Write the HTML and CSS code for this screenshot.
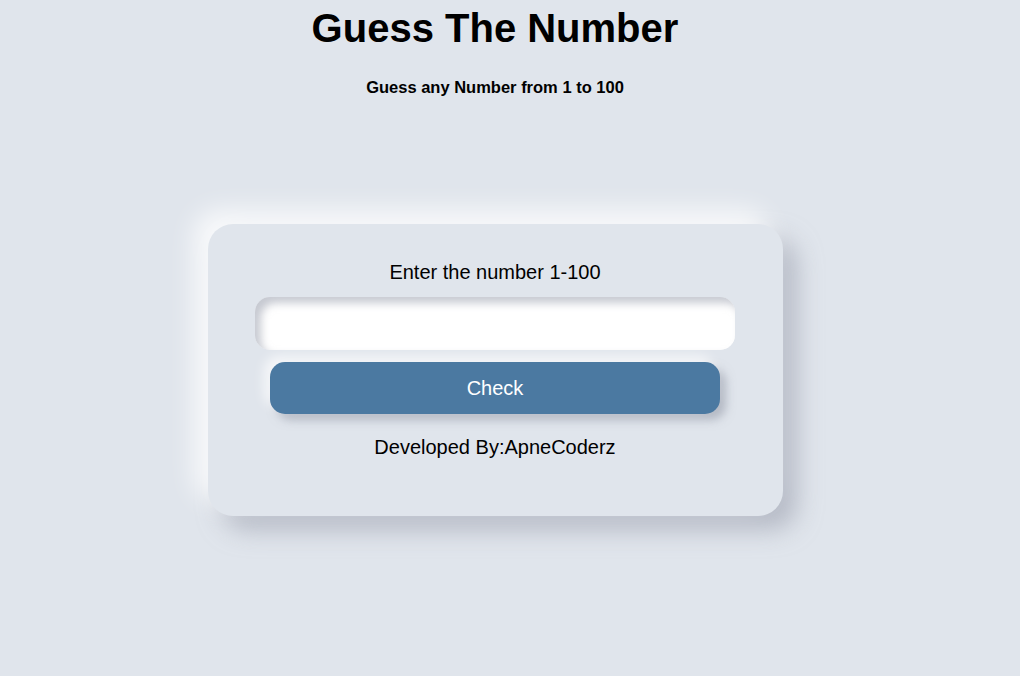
FILE: index.html
```html
<!DOCTYPE html>
<html lang="en">
<head>
    <meta charset="UTF-8">
    <meta name="viewport" content="width=device-width, initial-scale=1.0">
    <title>Guess The Number</title>
    <link rel="stylesheet" href="styles.css">
</head>
<body>
    <div class="page">
        <h1>Guess The Number</h1>
        <p class="subtitle">Guess any Number from 1 to 100</p>

        <div class="card">
            <label for="guess">Enter the number 1-100</label>
            <input type="text" id="guess">
            <button>Check</button>
            <p class="credit">Developed By:ApneCoderz</p>
        </div>
    </div>
</body>
</html>
```

FILE: styles.css
```css
html, body {
    min-height: 100%;
}

body {
    margin: 0;
    padding: 0;
    background-color: #e0e5ec;
    font-family: 'Liberation Sans', Arial, sans-serif;
    color: #000;
}

.page {
    width: 990px;
    min-height: 676px;
    display: flex;
    flex-direction: column;
    align-items: center;
}

h1 {
    font-size: 40px;
    margin: 5px 0 0;
    line-height: 46px;
}

.subtitle {
    font-size: 16.5px;
    font-weight: bold;
    margin: 27px 0 0;
}

.card {
    margin-top: 127px;
    width: 575px;
    height: 292px;
    box-sizing: border-box;
    padding: 36px 0 0;
    border-radius: 25px;
    background-color: #e0e5ec;
    box-shadow: -14px -14px 26px rgba(255, 255, 255, 0.8),
                14px 14px 24px rgba(160, 165, 178, 0.65);
    display: flex;
    flex-direction: column;
    align-items: center;
}

label {
    font-size: 20px;
    line-height: 24px;
}

input {
    margin-top: 13px;
    width: 480px;
    height: 53px;
    box-sizing: border-box;
    border: none;
    outline: none;
    border-radius: 15px;
    background-color: #fff;
    box-shadow: inset 6px 6px 8px rgba(160, 165, 178, 0.6),
                inset -6px -6px 8px rgba(255, 255, 255, 0.5);
    font-size: 20px;
    padding: 0 20px;
}

button {
    margin-top: 12px;
    width: 450px;
    height: 52px;
    border: none;
    border-radius: 15px;
    background-color: #4b79a1;
    color: #fff;
    font-family: 'Liberation Sans', Arial, sans-serif;
    font-size: 20px;
    cursor: pointer;
    box-shadow: -6px -6px 12px rgba(255, 255, 255, 0.7),
                6px 6px 10px rgba(160, 165, 178, 0.7);
}

.credit {
    font-size: 20px;
    margin: 22px 0 0;
}
```
